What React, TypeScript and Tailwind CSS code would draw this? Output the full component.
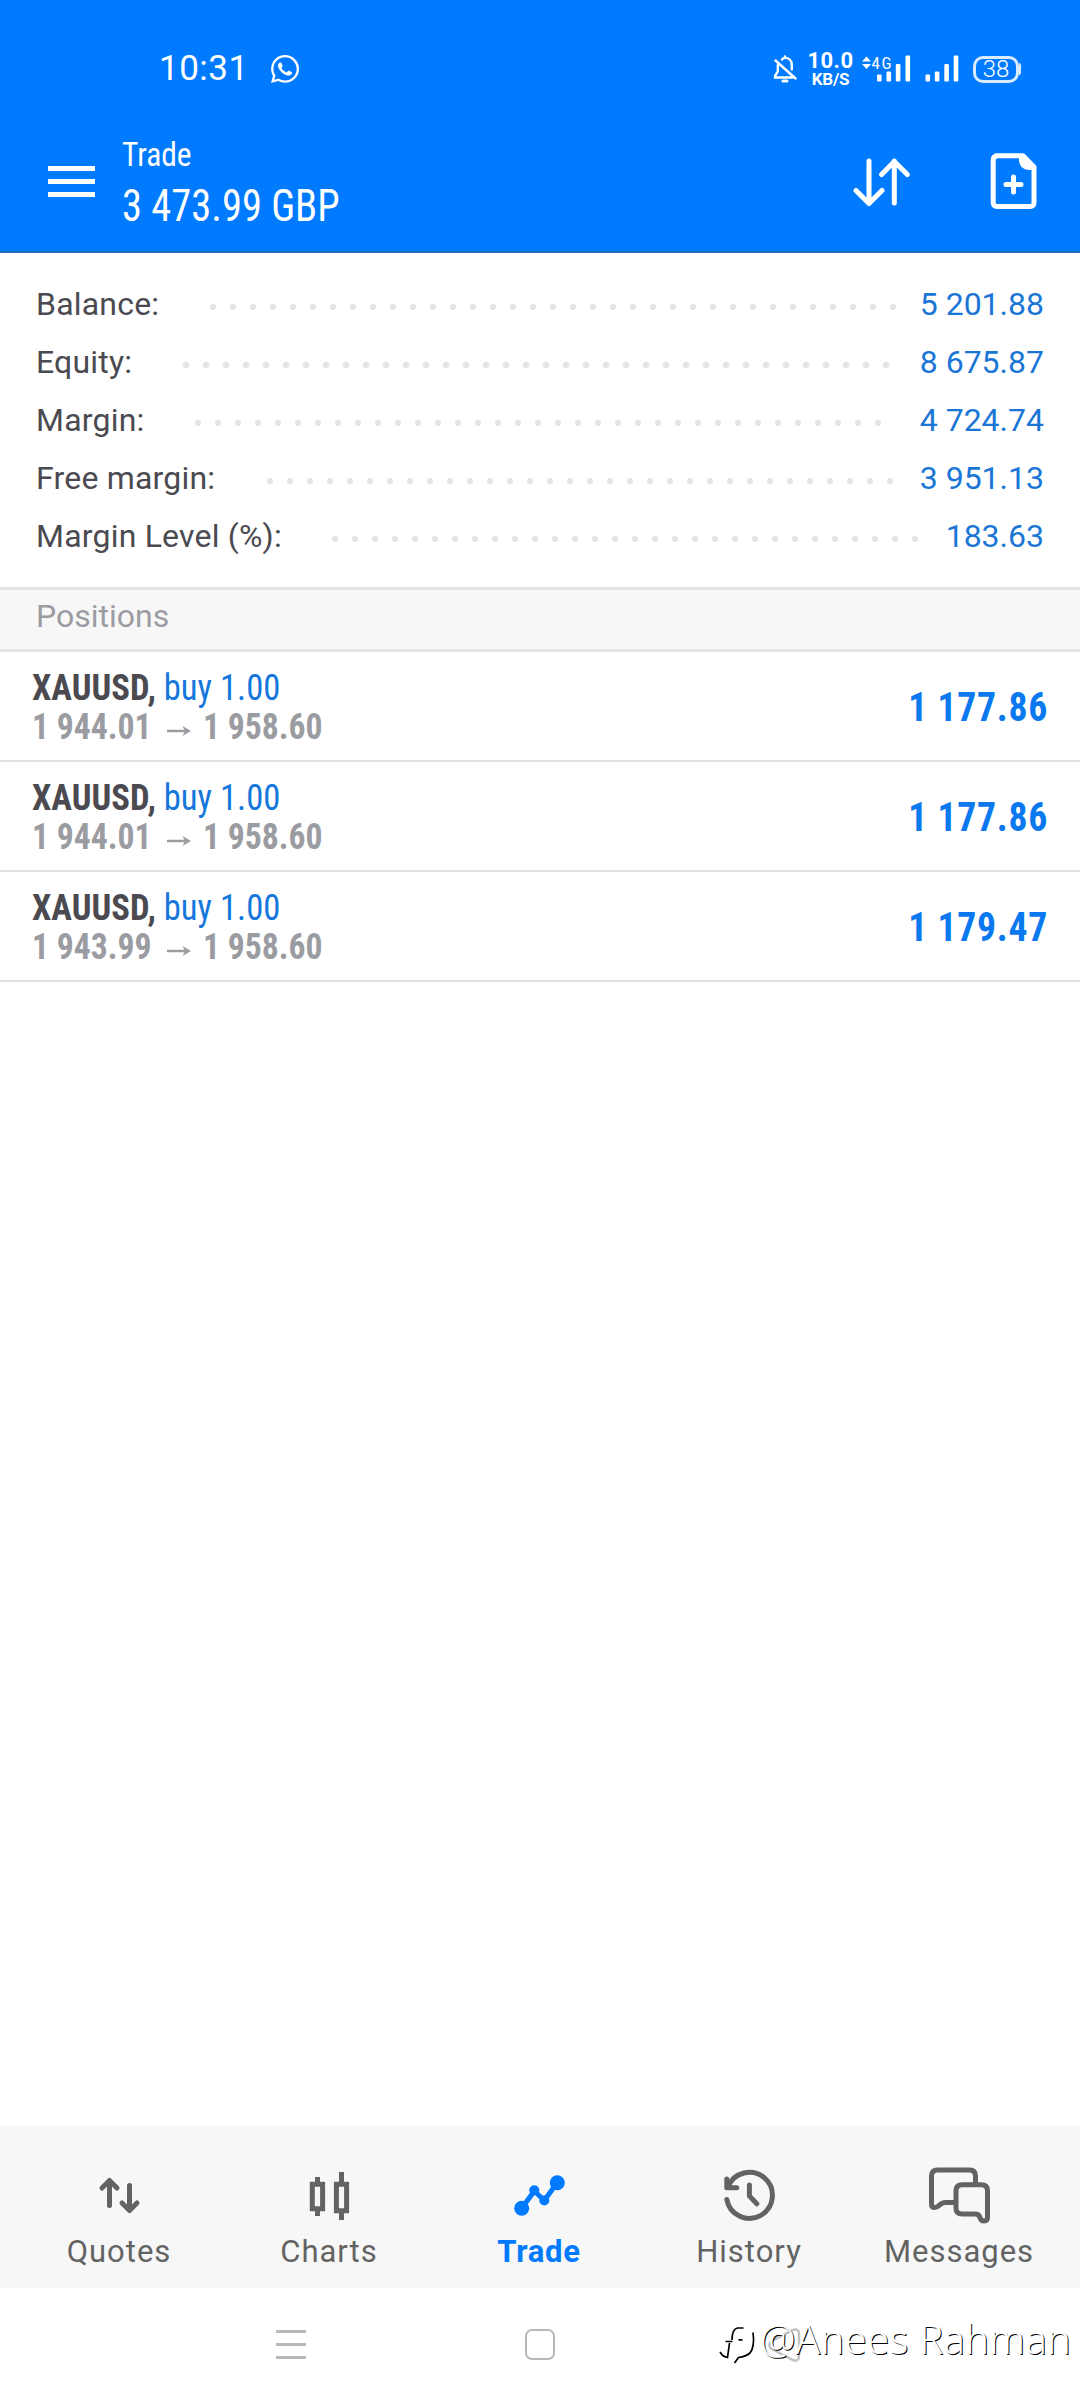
import React from 'react';
import { FaWhatsapp } from 'react-icons/fa';

const summary = [
  { label: 'Balance:', value: '5 201.88', start: 203, dots: 35 },
  { label: 'Equity:', value: '8 675.87', start: 176, dots: 36 },
  { label: 'Margin:', value: '4 724.74', start: 188, dots: 35 },
  { label: 'Free margin:', value: '3 951.13', start: 260, dots: 32 },
  { label: 'Margin Level (%):', value: '183.63', start: 325, dots: 30 },
];

const positions = [
  { symbol: 'XAUUSD', side: 'buy 1.00', open: '1 944.01', current: '1 958.60', profit: '1 177.86' },
  { symbol: 'XAUUSD', side: 'buy 1.00', open: '1 944.01', current: '1 958.60', profit: '1 177.86' },
  { symbol: 'XAUUSD', side: 'buy 1.00', open: '1 943.99', current: '1 958.60', profit: '1 179.47' },
];

function StatusBar() {
  return (
    <div className="flex h-[42px] items-center pl-[159px] pr-[59px]">
      <span className="w-[111px] text-[35px] leading-[42px] tracking-[0.5px]">10:31</span>
      <FaWhatsapp className="h-[32px] w-[30px]" />
      <svg className="ml-auto" width="24" height="30" viewBox="0 0 24 30" fill="none" stroke="currentColor" strokeWidth="2.4" strokeLinecap="round">
        <path d="M9 5.500c1-1.200 2-1.600 3-1.600 4 0 6.800 2.600 6.800 7v4.500M5.300 9.500c-.4 1-.5 2-.5 3.500v4.500L2 22v1.500h17M12 2.500v1M2.500 6.500l20 18" />
        <path d="M10 27h4" strokeWidth="3" />
      </svg>
      <div className="ml-[10px] flex w-[47px] flex-col items-center font-bold">
        <span className="text-[22px] leading-[20px] tracking-[0.500px]">10.0</span>
        <span className="text-[17px] leading-[17px] tracking-[-0.2px]">KB/S</span>
      </div>
      <svg className="ml-[8px] overflow-visible" width="98" height="30" viewBox="0 0 98 30" fill="currentColor">
        <path d="M4.500 2.500l4.500 5H0zM4.500 15l4.500-5H0z" />
        <text x="9.500" y="15" fontSize="17" fontFamily="Roboto Condensed" fontWeight="400" textLength="20">4G</text>
        <rect x="15" y="20.500" width="4.600" height="7" rx="1" />
        <rect x="24.500" y="17.500" width="4.600" height="10" rx="1" />
        <rect x="33.800" y="10" width="4.600" height="17.500" rx="1" />
        <rect x="43.500" y="1.500" width="4.600" height="26" rx="1" />
        <rect x="63.500" y="20.500" width="4.600" height="7" rx="1" />
        <rect x="72.800" y="17.500" width="4.600" height="10" rx="1" />
        <rect x="82.300" y="10" width="4.600" height="17.500" rx="1" />
        <rect x="91.700" y="1.500" width="4.600" height="26" rx="1" />
      </svg>
      <div className="ml-[13px] flex items-center">
        <div className="flex h-[27px] w-[46px] items-center justify-center rounded-[10px] border-[3px] border-white/85 text-[24px] font-light leading-none">38</div>
        <div className="h-[12px] w-[2px] rounded-r-full bg-white/85"></div>
      </div>
    </div>
  );
}

function Header() {
  return (
    <header className="h-[253px] border-b-2 border-[#1a6ec4] bg-[#007aff] pt-[48px] text-white">
      <StatusBar />
      <div className="mt-[43px] flex items-start">
        <div className="ml-[48px] mt-[33px] flex w-[74px] flex-col gap-[8px]">
          <div className="h-[5px] w-[47px] bg-white"></div>
          <div className="h-[5px] w-[47px] bg-white"></div>
          <div className="h-[5px] w-[47px] bg-white"></div>
        </div>
        <div className="flex flex-col items-start font-['Roboto_Condensed']">
          <span className="origin-left scale-x-[0.925] text-[34px] leading-[42px]">Trade</span>
          <span className="origin-left scale-x-[0.92] text-[44px] leading-[62px]">3 473.99 GBP</span>
        </div>
        <svg className="ml-auto mt-[22px]" width="60" height="52" viewBox="0 0 60 52" fill="none" stroke="currentColor" strokeWidth="5" strokeLinecap="round" strokeLinejoin="round">
          <path d="M18 6v42M5 35.500l13 13 13-13M43.300 48V6M30.600 19.500l12.700-13 13 13" />
        </svg>
        <svg className="ml-[77px] mr-[41px] mt-[18px]" width="51" height="60" viewBox="0 0 51 60" fill="none" stroke="currentColor" strokeWidth="5" strokeLinecap="round">
          <path d="M8 4.800h27L46 16v35.500q0 4-4 4H9.200q-4 0-4-4V9q0-4 4-4z" strokeLinejoin="round" />
          <path d="M31 5v4.500Q31.500 18.500 41 19h6v-4.500L36 3z" fill="currentColor" stroke="none" />
          <path d="M25.500 26v15M18 33.500h15" />
        </svg>
      </div>
    </header>
  );
}

function Summary() {
  return (
    <section className="border-b-[3px] border-[#e4e4e4] py-[22px] pr-[36px] text-[32px] leading-[58px]">
      {summary.map((row) => (
        <div key={row.label} className="flex h-[58px]">
          <span className="shrink-0 whitespace-nowrap pl-[36px] tracking-[0.200px] text-[#4a4a50]" style={{ width: row.start }}>{row.label}</span>
          <div
            className="mt-[22px] h-[20px] bg-[radial-gradient(circle,#e4e4e4_2.800px,transparent_3.500px)] bg-[length:20px_20px]"
            style={{ width: row.dots * 20 }}
          ></div>
          <span className="ml-auto text-[#1a76d6]">{row.value}</span>
        </div>
      ))}
    </section>
  );
}

function Positions() {
  return (
    <section>
      <h2 className="h-[62px] border-b-[3px] border-[#e4e4e4] bg-[#f7f7f7] pl-[36px] text-[32px] leading-[52px] text-[#9b9ca1]">Positions</h2>
      {positions.map((p, i) => (
        <div key={i} className="flex h-[110px] items-center justify-between border-b-[2px] border-[#e2e2e2] pl-[32px] pr-[32px] font-['Roboto_Condensed']">
          <div className="flex flex-col items-start pt-[2px] text-[37px] leading-[39px]">
            <div className="origin-left scale-x-[0.935] text-[#1577dc]">
              <span className="font-bold text-[#4a4a50]">{p.symbol},</span> {p.side}
            </div>
            <div className="flex items-center font-bold text-[#9b9ca1]">
              <span className="w-[134px] origin-left scale-x-[0.910]">{p.open}</span>
              <svg width="24" height="12" viewBox="0 0 24 12" className="ml-[1px] mr-[12px] mt-[8px] shrink-0">
                <path d="M0 6h20" stroke="currentColor" strokeWidth="2.500" />
                <path d="M15.500 1L24 6l-8.500 5 2.500-5z" fill="currentColor" />
              </svg>
              <span className="origin-left scale-x-[0.910]">{p.current}</span>
            </div>
          </div>
          <span className="origin-right scale-x-[0.920] pt-[2px] text-[41px] font-bold leading-none tracking-[0.800px] text-[#0a78ee]">{p.profit}</span>
        </div>
      ))}
    </section>
  );
}

function NavItem({ label, active, children }: { label: string; active?: boolean; children: React.ReactNode }) {
  return (
    <div className={active ? 'flex w-[210px] flex-col items-center text-[#007aff]' : 'flex w-[210px] flex-col items-center text-[#636363]'}>
      <svg width="64" height="60" viewBox="0 0 64 60" fill="none" stroke="currentColor" strokeWidth="5" strokeLinecap="round" strokeLinejoin="round">
        {children}
      </svg>
      <span className={active ? 'mt-[9px] text-[31px] font-bold leading-[36px] tracking-[0.700px]' : 'mt-[9px] text-[31px] leading-[36px] tracking-[1px]'}>{label}</span>
    </div>
  );
}

function BottomNav() {
  return (
    <nav className="mt-auto flex h-[162px] bg-[#f7f7f7] pl-[14px] pt-[39px]">
      <NavItem label="Quotes">
        <path d="M22.500 40.500V16M15 23l7.500-7.500L30 23M42.500 20.500V45M35 38l7.500 7.500L50 38" />
      </NavItem>
      <NavItem label="Charts">
        <g strokeLinecap="butt" strokeLinejoin="miter">
          <path d="M15.300 19.200h10.300v24.600H15.300zM20.500 12v7M20.500 44v7M39.400 19.200h10.200v26.600H39.400zM44.500 7v12M44.500 46v9" />
        </g>
      </NavItem>
      <NavItem label="Trade" active>
        <path d="M14.700 43.300L27.300 26l10 9.500 13-18" />
        <g fill="currentColor" stroke="none">
          <circle cx="14.700" cy="43.300" r="7.500" />
          <circle cx="27.300" cy="25.300" r="5" />
          <circle cx="37.300" cy="35.500" r="5" />
          <circle cx="50.300" cy="17.700" r="7.500" />
        </g>
      </NavItem>
      <NavItem label="History">
        <path d="M9.800 34.500A23 23 0 1 0 11 22M9.800 14v8.700h10M32.400 20v11l7.400 7.800" />
      </NavItem>
      <NavItem label="Messages">
        <path d="M48.500 18.500V11q0-6-6-6H10.500q-6 0-6 6v28q0 3.500 3 3.500 2.500 0 4.500-2 3-3 6.500-3H28" />
        <path d="M35 19.700h19.500q6 0 6 6V52q0 4-3.500 4-3 0-4-3.500-1-3.500-5-3.500H35q-6 0-6-6V25.700q0-6 6-6z" />
      </NavItem>
    </nav>
  );
}

function SystemBar() {
  return (
    <div className="relative flex h-[112px] items-start pl-[276px] pt-[41px]">
      <div className="mt-[1px] flex w-[30px] flex-col gap-[10px]">
        <div className="h-[3px] bg-[#b8b8b8]"></div>
        <div className="h-[3px] bg-[#b8b8b8]"></div>
        <div className="h-[3px] bg-[#b8b8b8]"></div>
      </div>
      <div className="ml-[219px] h-[31px] w-[30px] rounded-[7px] border-[2px] border-[#b8b8b8]"></div>
      <svg className="-mt-[2px] ml-[212px]" width="36" height="36" viewBox="0 0 36 36" fill="none" stroke="#c2c2c2" strokeWidth="2.500">
        <path d="M4 14.500L26 3q6-2 6 4v22q0 6-6 4L4 21.500q-3-3.500 0-7z" />
      </svg>
      <div className="absolute left-[718px] top-[28px] flex items-start">
        <svg className="mt-[10px]" width="40" height="40" viewBox="0 0 40 40" fill="none">
          <path d="M3 28L10 2h20q8 2 7 14-1 14-13 16l-8 6 1-6q-8 2-14-4z" fill="#fff" />
          <path d="M25.500 2H19.500Q14 3 14 14M7.500 15.500h7M20.500 13.800h4M11.500 17L9.500 31.500Q5 31 2 26M35 6.500q2 14-3 20.500-4 3.500-11.500 4.500l-4 5.500" stroke="#000" strokeWidth="1.700" />
        </svg>
        <span className="ml-[2px] whitespace-nowrap font-['Noto_Sans'] text-[40px] font-light leading-[46px] tracking-[0.300px] text-white [text-shadow:1px_1px_0_#000]">@Anees Rahman</span>
      </div>
    </div>
  );
}

export default function App() {
  return (
    <div className="flex h-[2400px] w-[1080px] flex-col overflow-hidden bg-white font-[Roboto,sans-serif]">
      <Header />
      <Summary />
      <Positions />
      <BottomNav />
      <SystemBar />
    </div>
  );
}
